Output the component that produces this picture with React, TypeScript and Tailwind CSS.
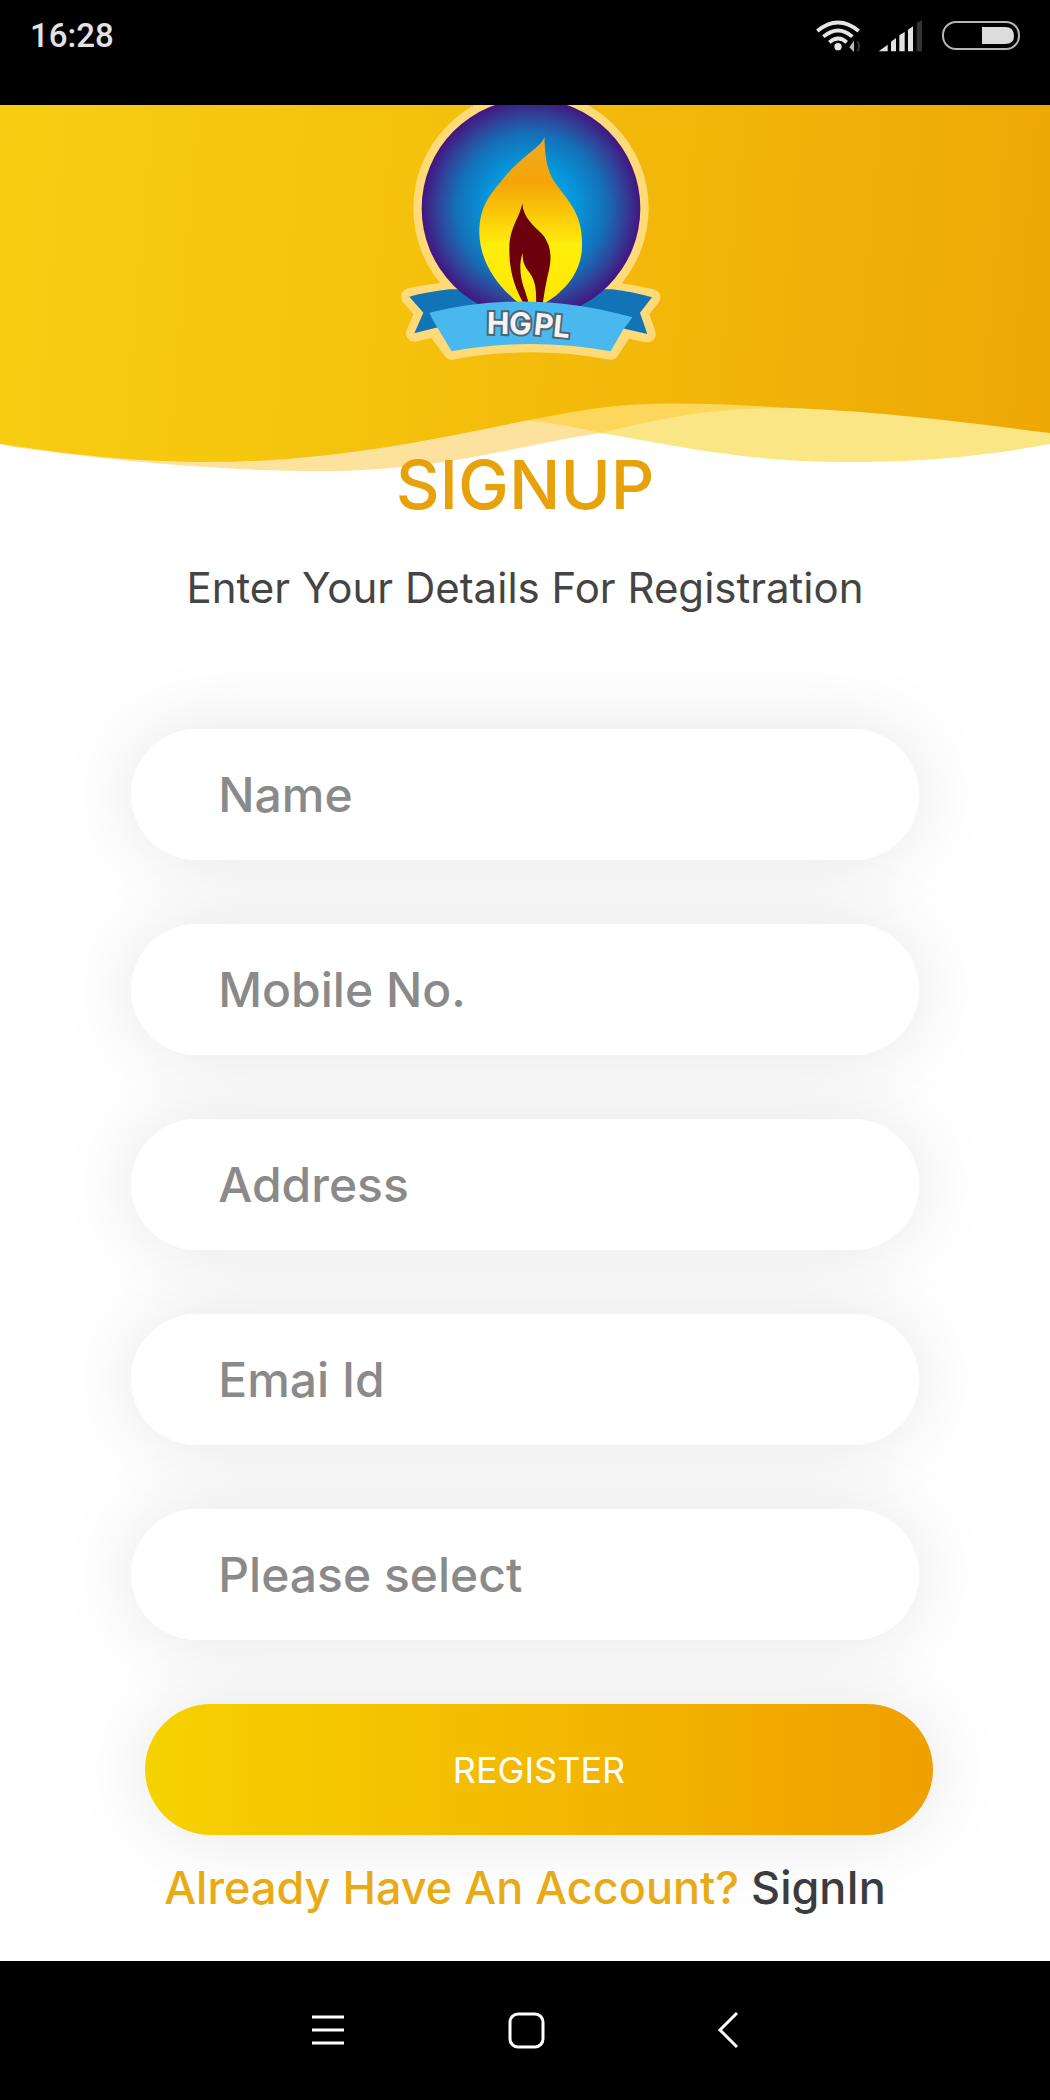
import React from "react";

type Field = {
  id: string;
  label: string;
  type: string;
};

const fields: Field[] = [
  { id: "name", label: "Name", type: "text" },
  { id: "mobile", label: "Mobile No.", type: "tel" },
  { id: "address", label: "Address", type: "text" },
  { id: "email", label: "Emai Id", type: "email" },
];

const StatusBar = () => (
  <div className="flex h-[105px] items-start justify-between bg-black px-7 pt-4 font-[Roboto,sans-serif]">
    <span className="pl-[2px] text-[33px] leading-10 font-medium text-[#e2e2e2]">16:28</span>
    <div className="flex items-center pt-[2px]">
      <svg width="50" height="36" viewBox="0 0 150 108" fill="none" aria-hidden="true">
        <g stroke="#e6e6e6" strokeWidth="11">
          <path d="M10 39Q72-12 134 39" />
          <path d="M28 56Q73 19 115 56" />
          <path d="M46 73Q73 50 98 73" />
        </g>
        <circle cx="72" cy="86" r="11" fill="#e6e6e6" />
        <path d="M106 88L120 68V102Z" fill="#bbb" />
        <path d="M130 70Q141 85 130 100" stroke="#333" strokeWidth="6" />
      </svg>
      <svg className="ml-3" width="46" height="32" viewBox="0 0 138 96" fill="#e2e2e2" aria-hidden="true">
        <path d="M8 94L35 74V94Z" />
        <path d="M45 65L60 54V94H45Z" />
        <path d="M70 46L86 36V94H70Z" />
        <path d="M96 29L111 19V94H96Z" />
        <path d="M122 8L138 0V94H122Z" fill="#333" />
      </svg>
      <svg className="ml-5" width="80" height="30" viewBox="0 0 80 30" aria-hidden="true">
        <rect x="1" y="1" width="76" height="27" rx="13" fill="none" stroke="#b5b5b5" strokeWidth="2" />
        <path d="M40 6H63Q72 6 72 15Q72 23 63 23H40Z" fill="#dcdcdc" />
      </svg>
    </div>
  </div>
);

const Waves = () => (
  <svg
    className="absolute inset-x-0 top-0 h-[367px] w-full"
    viewBox="0 105 1050 367"
    preserveAspectRatio="none"
    aria-hidden="true"
  >
    <defs>
      <linearGradient id="sky" x1="0" y1="0" x2="1" y2="0.03">
        <stop offset="0" stopColor="#f7cd12" />
        <stop offset="0.25" stopColor="#f5c70f" />
        <stop offset="0.5" stopColor="#f4bd0b" />
        <stop offset="1" stopColor="#eea906" />
      </linearGradient>
    </defs>
    <path d="M0 445C110 461 220 471 320 471C440 471 510 447 600 433C670 418 710 407 800 408L525 405L205 455Z" fill="#fce29d" />
    <path d="M525 420C580 422 580 430 600 433C670 444 740 462 850 462C930 462 990 455 1050 444V420L800 400Z" fill="#fae684" />
    <path d="M525 420Q565 424 600 433C670 417 710 407 800 408L670 395Z" fill="#fdd75b" />
    <path
      d="M0 105H1050V433C950 420 870 411 790 408C720 404 650 400 592 409C500 422 370 462 207 462C130 462 60 453 0 444Z"
      fill="url(#sky)"
    />
  </svg>
);

const Logo = () => (
  <svg className="relative h-[275px] w-[300px]" viewBox="0 43 900 825" role="img" aria-label="HGPL">
    <defs>
      <radialGradient id="orb">
        <stop offset="0" stopColor="#00b4f0" />
        <stop offset="0.4" stopColor="#0598dc" />
        <stop offset="0.68" stopColor="#1470b8" />
        <stop offset="0.84" stopColor="#2f459b" />
        <stop offset="1" stopColor="#421580" />
      </radialGradient>
      <linearGradient id="flame" x1="0" y1="0" x2="0" y2="1">
        <stop offset="0" stopColor="#eca824" />
        <stop offset="0.28" stopColor="#f6a508" />
        <stop offset="0.65" stopColor="#ffee0c" />
        <stop offset="1" stopColor="#ffe800" />
      </linearGradient>
    </defs>
    <g fill="#fedb78" stroke="#fedb78" strokeWidth="50" strokeLinejoin="round">
      <circle cx="453" cy="353" r="328" />
      <path d="M88 618Q150 604 220 598L690 598Q750 606 816 620L780 666L802 730L735 716L692 782Q450 738 215 782L165 714L103 728L130 666Z" />
    </g>
    <path d="M88 618Q140 604 208 596L300 596L300 680L150 716L103 728L130 666Z" fill="#1373b7" />
    <path d="M816 620Q760 604 696 596L600 596L600 680L740 716L802 730L780 666Z" fill="#1373b7" />
    <circle cx="453" cy="353" r="328" fill="url(#orb)" />
    <path
      d="M493 138C487 168 430 190 373 260C325 318 298 350 298 430C302 520 355 590 420 640H490C550 606 610 545 606 455C606 370 565 330 528 280C496 238 495 180 493 138Z"
      fill="url(#flame)"
    />
    <path
      d="M427 338C430 380 455 400 486 430C518 468 515 510 503 555Q494 594 488 640H468C470 595 465 570 450 548C432 524 427 512 428 486C416 520 420 565 435 600L447 640H432C410 602 387 550 388 475C388 410 418 385 427 338Z"
      fill="#6c000c"
    />
    <path d="M148 666Q450 592 757 680Q744 700 730 716L692 782Q450 738 215 782L178 720Q158 690 148 666Z" fill="#49b8ef" />
    <g
      fill="#f4f4f4"
      stroke="#53646f"
      strokeWidth="12"
      paintOrder="stroke"
      fontSize="90"
      fontWeight="700"
      className="font-[Inter,sans-serif]"
    >
      <text x="320" y="729" transform="rotate(1 320 729)">HG</text>
      <text x="459" y="731" transform="rotate(6 459 731)">PL</text>
    </g>
  </svg>
);

const NavBar = () => (
  <nav className="flex h-[139px] items-center justify-center gap-40 bg-black pl-1">
    <button type="button" aria-label="Recent apps" className="size-10">
      <svg viewBox="0 0 40 40" stroke="#fff" strokeWidth="3" aria-hidden="true">
        <path d="M5 6H37M5 19H37M5 32H37" />
      </svg>
    </button>
    <button type="button" aria-label="Home" className="size-10">
      <svg viewBox="0 0 40 40" fill="none" stroke="#fff" strokeWidth="3" aria-hidden="true">
        <rect x="3" y="3" width="33" height="33" rx="8" />
      </svg>
    </button>
    <button type="button" aria-label="Back" className="size-10">
      <svg viewBox="0 0 40 40" fill="none" stroke="#fff" strokeWidth="3" aria-hidden="true">
        <path d="M30 2L13 19L30 36" />
      </svg>
    </button>
  </nav>
);

const App = () => {
  return (
    <div className="flex min-h-screen flex-col bg-white font-[Inter,sans-serif]">
      <StatusBar />

      <header className="relative flex h-[335px] justify-center pl-[10px]">
        <Waves />
        <Logo />
      </header>

      <main className="relative flex flex-1 flex-col items-center">
        <h1 className="text-[68px] leading-[88px] font-medium text-[#e6a10b]">SIGNUP</h1>
        <p className="mt-7 text-[42px] leading-[64px] text-[#444]">Enter Your Details For Registration</p>

        <form className="mt-[109px] flex w-3/4 flex-col gap-16" onSubmit={(e) => e.preventDefault()}>
          {fields.map((field) => (
            <div key={field.id} className="rounded-full shadow-[0_0_80px_rgba(0,0,0,0.1)]">
              <input
                id={field.id}
                type={field.type}
                aria-label={field.label}
                placeholder={field.label}
                className="relative z-10 block h-[131px] w-full rounded-full bg-white px-[87px] text-[48px] font-medium outline-none placeholder:text-[#8a8a8a]"
              />
            </div>
          ))}
          <div className="rounded-full shadow-[0_0_80px_rgba(0,0,0,0.1)]">
            <select
              id="role"
              aria-label="Please select"
              className="relative z-10 block h-[131px] w-full appearance-none rounded-full bg-white px-[87px] text-[48px] font-medium text-[#8a8a8a] outline-none"
            >
              <option>Please select</option>
            </select>
          </div>
          <button
            type="submit"
            className="-mr-[14px] ml-[14px] h-[131px] rounded-full bg-linear-to-r from-[#f6d200] to-[#efa000] text-[36px] text-white shadow-[0_0_80px_rgba(0,0,0,0.1)]"
          >
            REGISTER
          </button>
        </form>

        <p className="relative mt-5 text-[45px] leading-[66px] font-medium text-[#e8ab16]">
          Already Have An Account?{" "}
          <a href="#signin" className="text-[#3c3c3f]">
            SignIn
          </a>
        </p>
      </main>

      <NavBar />
    </div>
  );
};

export default App;
